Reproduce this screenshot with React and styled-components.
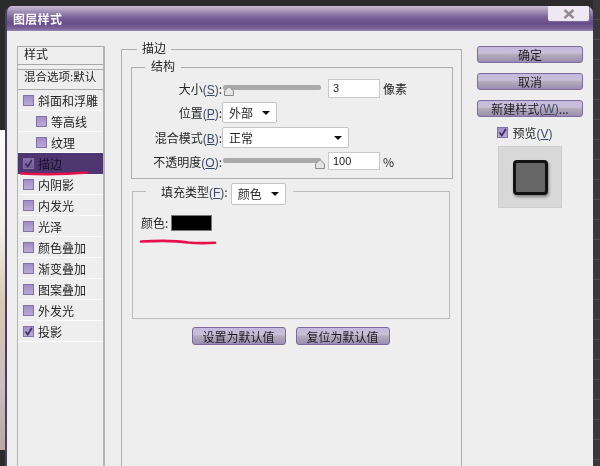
import React from "react";
import styled, { createGlobalStyle } from "styled-components";

const GlobalStyle = createGlobalStyle`
  html, body {
    margin: 0;
    padding: 0;
    background: #2b2a2c;
  }
  * {
    box-sizing: border-box;
  }
`;

const Page = styled.div`
  display: flex;
  width: 600px;
  height: 466px;
  overflow: hidden;
  background: #2b2a2c;
  font-family: "Noto Sans CJK SC", "Liberation Sans", sans-serif;
  font-size: 12px;
  color: #242424;
  filter: blur(0.35px);
`;

const LeftEdge = styled.div`
  width: 5px;
  padding-top: 130px;
  flex: none;
`;

const PhotoScrap = styled.div`
  height: 320px;
  background: linear-gradient(#fafafa 0, #f3efe8 30%, #d8c8b4 55%, #cdbcc0 80%, #b8a8a0 100%);
`;

const RightEdge = styled.div`
  width: 7px;
  flex: none;
  background: repeating-linear-gradient(#38383a 0 19px, #4a4a4c 19px 20px);
`;

const Dialog = styled.div`
  flex: 1;
  margin-top: 6px;
  height: 470px;
  border-left: 2px solid #4c3f66;
  border-radius: 7px 7px 0 0;
  background: #6a4f8c;
  overflow: hidden;
`;

const TitleBar = styled.div`
  display: flex;
  justify-content: space-between;
  align-items: flex-start;
  height: 25px;
  padding: 0 3px 0 6px;
  background: linear-gradient(#c9bdd6 0, #a898bb 18%, #7b6399 45%, #674c8a 70%, #7a6499 90%, #9a89b0 100%);
`;

const Title = styled.span`
  margin-top: 5px;
  font-size: 12px;
  font-weight: 700;
  letter-spacing: 0.3px;
  line-height: 16px;
  color: #fbfafc;
`;

const CloseButton = styled.div`
  display: flex;
  align-items: center;
  justify-content: center;
  width: 42px;
  height: 16px;
  background: #efe8f3;
  border-right: 1px solid #7d6a96;
  border-bottom: 1px solid #7d6a96;
  border-radius: 0 0 3px 3px;
`;

const Body = styled.div`
  display: flex;
  height: 445px;
  padding: 10px 10px 0 10px;
  background: #eeeeee;
`;

const StyleList = styled.div`
  width: 88px;
  height: 440px;
  margin-top: 5px;
  flex: none;
  border-left: 1px solid #b4b4b4;
  border-right: 2px solid #b4b4b4;
`;

const ListHead = styled.div`
  height: 19px;
  padding-left: 6px;
  border-top: 1px solid #a8a8a8;
  border-bottom: 1px solid #a8a8a8;
  line-height: 14px;
`;

const BlendRow = styled.div`
  height: 21px;
  margin-top: 4px;
  padding-left: 6px;
  border-top: 1px solid #a8a8a8;
  border-bottom: 1px solid #a8a8a8;
  line-height: 13px;
  white-space: nowrap;
  font-size: 11.5px;
`;

const StyleRow = styled.div`
  position: relative;
  display: flex;
  align-items: center;
  gap: 4px;
  height: 21px;
  padding-left: ${(p) => (p.$sub ? 18 : 5)}px;
  border-bottom: 1px solid ${(p) => (p.$active ? "#4e3670" : "#fbfbfb")};
  background: ${(p) => (p.$active ? "#4e3670" : "transparent")};
  color: ${(p) => (p.$active ? "#17102a" : "#242424")};
`;

const Box = styled.span`
  display: inline-flex;
  align-items: center;
  justify-content: center;
  width: 11px;
  height: 11px;
  flex: none;
  border: 1px solid #8470a8;
  background: ${(p) =>
    p.$active
      ? "linear-gradient(#8672a6, #6f5a92)"
      : "linear-gradient(#a28dc8, #b9aad6)"};
`;

const RedStroke = styled.svg`
  position: absolute;
  pointer-events: none;
  overflow: visible;
`;

const ListStroke = styled(RedStroke)`
  left: 2px;
  top: 18px;
`;

const MainPane = styled.fieldset`
  width: 341px;
  height: 450px;
  margin: 0 15px 0 16px;
  padding: 2px 0 0 9px;
  flex: none;
  min-inline-size: 0;
  border: 1px solid #aeaeae;
  border-bottom: none;
`;

const Legend = styled.legend`
  height: 16px;
  margin-left: 6px;
  padding: 0 5px;
  font-size: 12px;
  line-height: 14px;
`;

const StructGroup = styled.fieldset`
  width: 322px;
  height: 120px;
  margin: 0;
  padding: 4px 0 0 0;
  min-inline-size: 0;
  border: 1px solid #aeaeae;
`;

const SubLegend = styled(Legend)`
  margin-left: 13px;
  padding: 0 6px;
`;

const Form = styled.div`
  display: grid;
  grid-auto-rows: auto;
  gap: 4px;
`;

const FormRow = styled.div`
  display: flex;
  align-items: center;
`;

const FieldLabel = styled.span`
  width: 90px;
  flex: none;
  text-align: right;
  white-space: nowrap;
`;

const Mnemonic = styled.span`
  font-family: "Liberation Sans", sans-serif;
  font-size: 12px;
  color: #3d4a66;
`;

const SliderTrack = styled.div`
  position: relative;
  width: 98px;
  height: 5px;
  margin: 0 7px 2px 1px;
  flex: none;
  border-radius: 2px;
  background: #a9a9a9;
`;

const SliderThumb = styled.svg`
  position: absolute;
  top: 1px;
  left: ${(p) => (p.$end ? 92 : 1)}px;
`;

const NumberBox = styled.div`
  width: 52px;
  height: ${(p) => p.$h}px;
  padding-left: 4px;
  flex: none;
  background: #fff;
  border: 1px solid #c9c9c9;
  font-family: "Liberation Sans", sans-serif;
  font-size: 11px;
  line-height: ${(p) => p.$h - 2}px;
`;

const Unit = styled.span`
  margin-left: 3px;
`;

const Select = styled.div`
  display: flex;
  align-items: center;
  justify-content: space-between;
  width: ${(p) => p.$w}px;
  height: ${(p) => p.$h || 21}px;
  padding: 0 4px 0 6px;
  flex: none;
  background: #fff;
  border: 1px solid #c4c4c4;
  border-radius: 2px;
`;

const Caret = styled.span`
  width: 0;
  height: 0;
  margin-right: 2px;
  border-left: 4px solid transparent;
  border-right: 4px solid transparent;
  border-top: 4px solid #111;
`;

const FillGroup = styled.fieldset`
  width: 318px;
  height: 136px;
  margin: 4px 0 0 1px;
  padding: 14px 0 0 8px;
  min-inline-size: 0;
  border: 1px solid #bcbcbc;
`;

const FillLegend = styled.legend`
  display: flex;
  align-items: flex-start;
  gap: 3px;
  height: 17px;
  margin-left: 5px;
  padding: 0 7px 0 15px;
  line-height: 18px;
`;

const ColorRow = styled.div`
  position: relative;
  display: flex;
  align-items: center;
  gap: 3px;
`;

const Swatch = styled.div`
  width: 41px;
  height: 16px;
  background: #000;
  border: 1px solid #777;
`;

const ColorStroke = styled(RedStroke)`
  left: -1px;
  top: 26px;
`;

const DefaultRow = styled.div`
  display: flex;
  justify-content: center;
  gap: 10px;
  margin: 8px 11px 0 0;
`;

const PurpleButton = styled.div`
  display: flex;
  align-items: center;
  justify-content: center;
  width: ${(p) => p.$w}px;
  height: ${(p) => p.$h}px;
  flex: none;
  border: 1px solid #7d6a9e;
  border-radius: 3px;
  background: linear-gradient(#c5b9dc 0, #c9bfd9 40%, #b3abbb 52%, #a59ab4 80%, #9a8cb2 100%);
  color: #1d1a22;
  font-size: 12px;
  white-space: nowrap;
`;

const SideColumn = styled.div`
  display: flex;
  flex-direction: column;
  align-items: center;
  width: 106px;
  margin-top: 5px;
  flex: none;
`;

const SideButtons = styled.div`
  display: flex;
  flex-direction: column;
  gap: 10px;
`;

const PreviewCheck = styled.div`
  display: flex;
  align-items: center;
  gap: 4px;
  height: 14px;
  margin: 8px 10px 0 0;
`;

const PreviewBox = styled.div`
  display: flex;
  align-items: center;
  justify-content: center;
  width: 64px;
  height: 62px;
  margin-top: 7px;
  background: #d8d8d8;
  border: 1px solid #cdcdcd;
`;

const PreviewSquare = styled.div`
  width: 35px;
  height: 35px;
  border: 3px solid #111;
  border-radius: 4px;
  background: #666;
  box-shadow: 1px 2px 3px rgba(0, 0, 0, 0.4);
`;

const Check = () => (
  <svg width="9" height="9" viewBox="0 0 9 9">
    <path d="M1.5 4.5 L3.8 7.5 L7.8 1" fill="none" stroke="#3d2a66" strokeWidth="1.6" />
  </svg>
);

const Thumb = ({ end }) => (
  <SliderThumb $end={end} width="10" height="10" viewBox="0 0 10 10">
    <path d="M5 .5 L9.5 5 V9.5 H.5 V5 Z" fill="#e4e4e4" stroke="#8b8b8b" />
  </SliderThumb>
);

const Key = ({ k }) => (
  <Mnemonic>
    (<u>{k}</u>)
  </Mnemonic>
);

const effects = [
  { name: "斜面和浮雕" },
  { name: "等高线", sub: true },
  { name: "纹理", sub: true },
  { name: "描边", checked: true, active: true },
  { name: "内阴影" },
  { name: "内发光" },
  { name: "光泽" },
  { name: "颜色叠加" },
  { name: "渐变叠加" },
  { name: "图案叠加" },
  { name: "外发光" },
  { name: "投影", checked: true },
];

export default function App() {
  return (
    <Page>
      <GlobalStyle />
      <LeftEdge>
        <PhotoScrap />
      </LeftEdge>
      <Dialog>
        <TitleBar>
          <Title>图层样式</Title>
          <CloseButton>
            <svg width="12" height="10" viewBox="0 0 12 10">
              <path d="M1.5 1 L10.5 9 M10.5 1 L1.5 9" stroke="#8f8a96" strokeWidth="2.4" fill="none" />
            </svg>
          </CloseButton>
        </TitleBar>
        <Body>
          <StyleList>
            <ListHead>样式</ListHead>
            <BlendRow>混合选项:默认</BlendRow>
            {effects.map((fx) => (
              <StyleRow key={fx.name} $sub={fx.sub} $active={fx.active}>
                <Box $active={fx.active}>{fx.checked && <Check />}</Box>
                {fx.name}
                {fx.active && (
                  <ListStroke width="68" height="5" viewBox="0 0 68 5">
                    <path d="M1 2.5 C20 3.5 45 3.5 67 1.5" fill="none" stroke="#e5104c" strokeWidth="2.6" strokeLinecap="round" />
                  </ListStroke>
                )}
              </StyleRow>
            ))}
          </StyleList>

          <MainPane>
            <Legend>描边</Legend>
            <StructGroup>
              <SubLegend>结构</SubLegend>
              <Form>
                <FormRow>
                  <FieldLabel>大小<Key k="S" />:</FieldLabel>
                  <SliderTrack>
                    <Thumb />
                  </SliderTrack>
                  <NumberBox $h={19}>3</NumberBox>
                  <Unit>像素</Unit>
                </FormRow>
                <FormRow>
                  <FieldLabel>位置<Key k="P" />:</FieldLabel>
                  <Select $w={55}>外部<Caret /></Select>
                </FormRow>
                <FormRow>
                  <FieldLabel>混合模式<Key k="B" />:</FieldLabel>
                  <Select $w={127}>正常<Caret /></Select>
                </FormRow>
                <FormRow>
                  <FieldLabel>不透明度<Key k="O" />:</FieldLabel>
                  <SliderTrack>
                    <Thumb end />
                  </SliderTrack>
                  <NumberBox $h={18}>100</NumberBox>
                  <Unit>%</Unit>
                </FormRow>
              </Form>
            </StructGroup>

            <FillGroup>
              <FillLegend>
                <span>填充类型<Key k="F" />:</span>
                <Select $w={55} $h={22}>颜色<Caret /></Select>
              </FillLegend>
              <ColorRow>
                <span>颜色:</span>
                <Swatch />
                <ColorStroke width="76" height="5" viewBox="0 0 76 5">
                  <path d="M1 1.5 C20 .5 38 .8 48 2.5 C58 3.5 66 3.2 75 2.8" fill="none" stroke="#e5104c" strokeWidth="2.6" strokeLinecap="round" />
                </ColorStroke>
              </ColorRow>
            </FillGroup>

            <DefaultRow>
              <PurpleButton $w={94} $h={18}>设置为默认值</PurpleButton>
              <PurpleButton $w={94} $h={18}>复位为默认值</PurpleButton>
            </DefaultRow>
          </MainPane>

          <SideColumn>
            <SideButtons>
              <PurpleButton $w={106} $h={17}>确定</PurpleButton>
              <PurpleButton $w={106} $h={17}>取消</PurpleButton>
              <PurpleButton $w={106} $h={17}>新建样式<Key k="W" />...</PurpleButton>
            </SideButtons>
            <PreviewCheck>
              <Box><Check /></Box>
              <span>预览<Key k="V" /></span>
            </PreviewCheck>
            <PreviewBox>
              <PreviewSquare />
            </PreviewBox>
          </SideColumn>
        </Body>
      </Dialog>
      <RightEdge />
    </Page>
  );
}
